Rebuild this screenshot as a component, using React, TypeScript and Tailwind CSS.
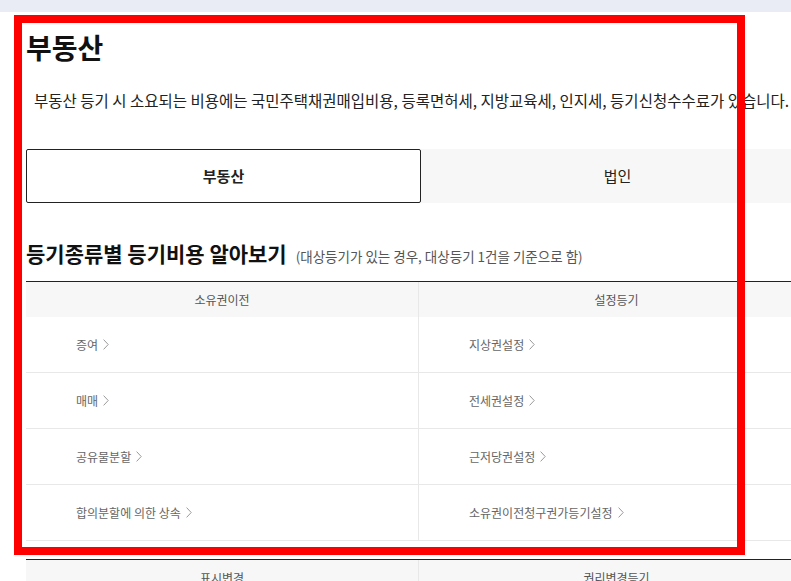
import { ReactNode } from "react";

const FONT = { fontFamily: '"Noto Sans CJK KR", "Noto Sans", sans-serif' };

function Chevron() {
  return (
    <svg width="6" height="11" viewBox="0 0 6 11" fill="none" className="ml-[5px] inline-block">
      <path d="M0.6 0.6 L5.2 5.5 L0.6 10.4" stroke="#9a9a9a" strokeWidth="1" />
    </svg>
  );
}

function Cell({ children, left = false }: { children: ReactNode; left?: boolean }) {
  return (
    <div
      className={
        "flex h-[56px] items-center border-b border-[#e8e8e8] pl-[50px] text-[12px] text-[#666] " +
        (left ? "border-r border-r-[#e8e8e8]" : "")
      }
    >
      {children}
      <Chevron />
    </div>
  );
}

const transfer = ["증여", "매매", "공유물분할", "합의분할에 의한 상속"];
const setting = ["지상권설정", "전세권설정", "근저당권설정", "소유권이전청구권가등기설정"];

export default function App() {
  return (
    <div className="relative min-h-[581px] w-max min-w-full bg-white text-[#222]" style={FONT}>
      <div className="h-3 w-full bg-[#e9ecf4]" />

      <div className="w-[840px] px-[26px]">
        <h1 className="pt-[17px] text-[28px] font-bold leading-[36px] text-[#111]">부동산</h1>

        <p className="mt-[24px] pl-2 text-[15.5px] leading-[22px] whitespace-nowrap">
          부동산 등기 시 소요되는 비용에는 국민주택채권매입비용, 등록면허세, 지방교육세, 인지세, 등기신청수수료가 있습니다.
        </p>

        <div className="mt-[38px] flex w-[788px]">
          <button className="flex h-[54px] w-[395px] items-center justify-center rounded-[2px] border border-[#222] bg-white text-[15px] font-bold">
            부동산
          </button>
          <button className="flex h-[54px] flex-1 items-center justify-center bg-[#f7f7f7] text-[15px]">
            법인
          </button>
        </div>

        <div className="mt-[36px] flex items-baseline">
          <h2 className="text-[21px] font-bold leading-[28px] text-[#111]">등기종류별 등기비용 알아보기</h2>
          <span className="ml-[9px] text-[13.5px] text-[#555]">(대상등기가 있는 경우, 대상등기 1건을 기준으로 함)</span>
        </div>

        <div className="mt-[14px] w-[788px] border-t border-[#222]">
          <div className="grid grid-cols-[393px_1fr]">
            <div className="flex h-[35px] items-center justify-center border-r border-[#e8e8e8] bg-[#f7f7f7] text-[12px] text-[#555]">
              소유권이전
            </div>
            <div className="flex h-[35px] items-center justify-center bg-[#f7f7f7] text-[12px] text-[#555]">
              설정등기
            </div>
            {transfer.map((t, i) => (
              <div key={t} className="contents">
                <Cell left>{t}</Cell>
                <Cell>{setting[i]}</Cell>
              </div>
            ))}
          </div>
        </div>

        <div className="mt-[18px] w-[788px] border-t border-[#222]">
          <div className="grid grid-cols-[393px_1fr]">
            <div className="flex h-[35px] items-center justify-center border-r border-[#e8e8e8] bg-[#f7f7f7] text-[12px] text-[#555]">
              표시변경
            </div>
            <div className="flex h-[35px] items-center justify-center bg-[#f7f7f7] text-[12px] text-[#555]">
              권리변경등기
            </div>
          </div>
        </div>
      </div>

      {/* annotation frame drawn over the page */}
      <div className="pointer-events-none absolute left-[14px] top-[15px] h-[540px] w-[731px] border-[8px] border-[#ff0000]" />
    </div>
  );
}
